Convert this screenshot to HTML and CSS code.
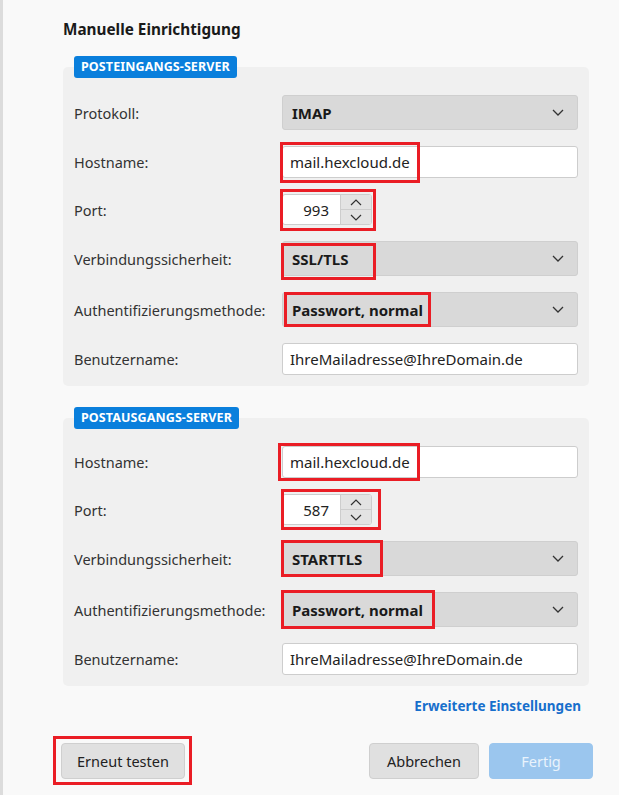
FILE: index.html
```html
<!DOCTYPE html>
<html lang="de">
<head>
<meta charset="utf-8">
<title>Manuelle Einrichtigung</title>
<link rel="stylesheet" href="styles.css">
</head>
<body>
<div class="window">
  <div class="edge"></div>
  <main class="content">
    <h1 class="title">Manuelle Einrichtigung</h1>

    <section class="group">
      <div class="badge">POSTEINGANGS-SERVER</div>
      <div class="panel">
        <div class="row">
          <span class="label">Protokoll:</span>
          <div class="ctl">
            <div class="select"><span class="val">IMAP</span><svg class="chev" viewBox="0 0 12 7"><path d="M1 1l5 5 5-5"/></svg></div>
          </div>
        </div>
        <div class="row">
          <span class="label">Hostname:</span>
          <div class="ctl">
            <div class="input">mail.hexcloud.de</div>
            <span class="mark m-host1"></span>
          </div>
        </div>
        <div class="row">
          <span class="label">Port:</span>
          <div class="ctl">
            <div class="spin">
              <div class="spin-field">993</div>
              <div class="spin-btns">
                <span class="spin-btn"><svg viewBox="0 0 12 7"><path d="M1 6l5-5 5 5"/></svg></span>
                <span class="spin-btn"><svg viewBox="0 0 12 7"><path d="M1 1l5 5 5-5"/></svg></span>
              </div>
            </div>
            <span class="mark m-port1"></span>
          </div>
        </div>
        <div class="row">
          <span class="label">Verbindungssicherheit:</span>
          <div class="ctl">
            <div class="select"><span class="val">SSL/TLS</span><svg class="chev" viewBox="0 0 12 7"><path d="M1 1l5 5 5-5"/></svg></div>
            <span class="mark m-sec1"></span>
          </div>
        </div>
        <div class="row">
          <span class="label">Authentifizierungsmethode:</span>
          <div class="ctl">
            <div class="select"><span class="val">Passwort, normal</span><svg class="chev" viewBox="0 0 12 7"><path d="M1 1l5 5 5-5"/></svg></div>
            <span class="mark m-auth1"></span>
          </div>
        </div>
        <div class="row">
          <span class="label">Benutzername:</span>
          <div class="ctl">
            <div class="input">IhreMailadresse@IhreDomain.de</div>
          </div>
        </div>
      </div>
    </section>

    <section class="group group-out">
      <div class="badge">POSTAUSGANGS-SERVER</div>
      <div class="panel">
        <div class="row">
          <span class="label">Hostname:</span>
          <div class="ctl">
            <div class="input">mail.hexcloud.de</div>
            <span class="mark m-host2"></span>
          </div>
        </div>
        <div class="row">
          <span class="label">Port:</span>
          <div class="ctl">
            <div class="spin">
              <div class="spin-field">587</div>
              <div class="spin-btns">
                <span class="spin-btn"><svg viewBox="0 0 12 7"><path d="M1 6l5-5 5 5"/></svg></span>
                <span class="spin-btn"><svg viewBox="0 0 12 7"><path d="M1 1l5 5 5-5"/></svg></span>
              </div>
            </div>
            <span class="mark m-port2"></span>
          </div>
        </div>
        <div class="row">
          <span class="label">Verbindungssicherheit:</span>
          <div class="ctl">
            <div class="select"><span class="val">STARTTLS</span><svg class="chev" viewBox="0 0 12 7"><path d="M1 1l5 5 5-5"/></svg></div>
            <span class="mark m-sec2"></span>
          </div>
        </div>
        <div class="row">
          <span class="label">Authentifizierungsmethode:</span>
          <div class="ctl">
            <div class="select"><span class="val">Passwort, normal</span><svg class="chev" viewBox="0 0 12 7"><path d="M1 1l5 5 5-5"/></svg></div>
            <span class="mark m-auth2"></span>
          </div>
        </div>
        <div class="row">
          <span class="label">Benutzername:</span>
          <div class="ctl">
            <div class="input">IhreMailadresse@IhreDomain.de</div>
          </div>
        </div>
      </div>
    </section>

    <div class="advanced"><a class="link" href="#">Erweiterte Einstellungen</a></div>

    <div class="buttons">
      <div class="ctl-btn">
        <button class="btn" type="button">Erneut testen</button>
        <span class="mark m-retest"></span>
      </div>
      <div class="btn-right">
        <button class="btn" type="button">Abbrechen</button>
        <button class="btn btn-primary" type="button">Fertig</button>
      </div>
    </div>
  </main>
</div>
</body>
</html>
```

FILE: styles.css
```css
* { box-sizing: border-box; }
html, body { margin: 0; padding: 0; }
body {
  background: #f9f9f9;
  font-family: "Noto Sans", "Open Sans", sans-serif;
  color: #1c1c1c;
  width: 619px;
  height: 795px;
  overflow: hidden;
}
.window {
  display: flex;
  height: 795px;
}
.edge {
  width: 3px;
  background: #dcdcdc;
  flex: none;
}
.content {
  padding: 19px 0 0 60px;
  width: 586px;
}
.title {
  margin: 0 0 16px 0;
  font-size: 15.3px;
  font-weight: 700;
  line-height: 21px;
  color: #1a1a1a;
}
.group-out { margin-top: 21px; }
.badge {
  display: block;
  width: fit-content;
  position: relative;
  z-index: 1;
  margin-left: 11px;
  margin-bottom: -11px;
  height: 22px;
  line-height: 22px;
  padding: 0 7px;
  background: #0a7fdc;
  color: #fff;
  border-radius: 3px;
  font-size: 12.5px;
  font-weight: 700;
  letter-spacing: 0.1px;
}
.panel {
  background: #f0f0f0;
  border-radius: 5px;
  padding: 28px 11px 11px 11px;
  display: flex;
  flex-direction: column;
  gap: 16px;
  width: 526px;
}
.row {
  display: grid;
  grid-template-columns: 208px 296px;
  align-items: center;
}
.label {
  font-size: 14.5px;
  color: #333;
}
.ctl { position: relative; }
.select {
  height: 35px;
  background: #d9d9d9;
  border: 1px solid #cfcfcf;
  border-radius: 3px;
  display: flex;
  align-items: center;
  justify-content: space-between;
  padding: 0 13px 0 9px;
}
.val {
  font-size: 15px;
  font-weight: 700;
  color: #1a1a1a;
}
.chev {
  width: 12px;
  height: 7px;
  fill: none;
  stroke: #333;
  stroke-width: 1.3;
}
.input {
  height: 32px;
  background: #fff;
  border: 1px solid #cdcdcd;
  border-radius: 3px;
  padding: 0 7px;
  display: flex;
  align-items: center;
  font-size: 15px;
  color: #222;
}
.spin {
  display: flex;
  width: 90px;
  height: 31px;
  border: 1px solid #cdcdcd;
  border-radius: 3px;
  overflow: hidden;
  background: #fff;
}
.spin-field {
  width: 57px;
  display: flex;
  align-items: center;
  justify-content: flex-end;
  padding-right: 11px;
  font-size: 15px;
  color: #222;
}
.spin-btns {
  flex: 1;
  display: flex;
  flex-direction: column;
  border-left: 1px solid #cdcdcd;
}
.spin-btn {
  flex: 1;
  background: #e3e3e3;
  display: flex;
  align-items: center;
  justify-content: center;
}
.spin-btn + .spin-btn { border-top: 1px solid #cdcdcd; }
.spin-btn svg {
  width: 12px;
  height: 7px;
  fill: none;
  stroke: #333;
  stroke-width: 1.2;
}
.mark {
  position: absolute;
  border: 3px solid #ea1d25;
  pointer-events: none;
}
.m-host1 { left: -2px; top: -4px; width: 140px; height: 41px; }
.m-port1 { left: -2px; top: -5px; width: 96px; height: 42px; }
.m-sec1 { left: -1px; top: 2px; width: 95px; height: 37px; }
.m-auth1 { left: 2px; top: 0; width: 147px; height: 35px; }
.m-host2 { left: -4px; top: -3px; width: 142px; height: 38px; }
.m-port2 { left: -1px; top: -5px; width: 100px; height: 41px; }
.m-sec2 { left: -1px; top: -1px; width: 102px; height: 37px; }
.m-auth2 { left: -1px; top: -2px; width: 154px; height: 39px; }
.m-retest { left: -8px; top: -7px; width: 139px; height: 49px; }
.advanced {
  display: flex;
  justify-content: flex-end;
  width: 518px;
  margin-top: 11px;
}
.link {
  color: #176fcc;
  font-weight: 700;
  font-size: 13.5px;
  text-decoration: none;
  line-height: 18px;
}
.buttons {
  display: flex;
  justify-content: space-between;
  margin-top: 28px;
  margin-left: -2px;
  width: 532px;
}
.ctl-btn { position: relative; }
.btn-right { display: flex; gap: 10px; }
.btn {
  height: 36px;
  border: 1px solid #cfcfcf;
  background: #e0e0e0;
  border-radius: 4px;
  font-family: inherit;
  font-size: 14.5px;
  color: #222;
  padding: 0 14px;
}
.ctl-btn .btn { width: 124px; }
.btn-right .btn { width: 110px; }
.btn-right .btn-primary {
  width: 104px;
  background: #9bc6ee;
  border-color: #9bc6ee;
  color: #e9f3fc;
}
```
